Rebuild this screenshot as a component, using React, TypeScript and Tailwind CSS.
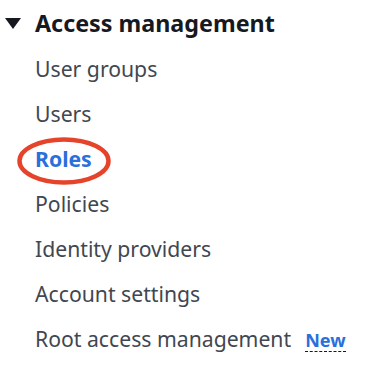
import React from 'react'

const items = [
  'User groups',
  'Users',
  'Roles',
  'Policies',
  'Identity providers',
  'Account settings',
]

const App = () => {
  return (
    <div
      className="w-[388px] h-[370px] bg-white overflow-hidden"
      style={{ fontFamily: '"Noto Sans", "Open Sans", sans-serif' }}
    >
      <div className="flex items-center h-[46px]">
        <svg width="16" height="11" viewBox="0 0 16 11" className="ml-[5px] mr-[14px]">
          <polygon points="0,0 16,0 8,11" fill="#16191f" />
        </svg>
        <span className="text-[23.3px] font-bold text-[#16191f] leading-[46px]">
          Access management
        </span>
      </div>
      <ul className="flex flex-col pl-[35px]">
        {items.map((item) => (
          <li
            key={item}
            className="relative h-[45px] leading-[45px] text-[21.2px]"
          >
            {item === 'Roles' ? (
              <>
                <span className="font-bold text-[#2a6fdb]">Roles</span>
                {/* hand-drawn highlight around the active link */}
                <svg
                  width="96"
                  height="52"
                  viewBox="0 0 96 52"
                  className="absolute left-[-19px] top-[-1.5px]"
                >
                  <ellipse
                    cx="48"
                    cy="26"
                    rx="44.5"
                    ry="21.5"
                    fill="none"
                    stroke="#e6432b"
                    strokeWidth="4.5"
                  />
                </svg>
              </>
            ) : (
              <span className="text-[#414750]">{item}</span>
            )}
          </li>
        ))}
        <li className="flex items-baseline h-[45px] leading-[45px] text-[21.2px]">
          <span className="text-[#414750]">Root access management</span>
          <span className="ml-[14px] text-[18px] font-bold text-[#2a6fdb] leading-[22px] border-b border-dashed border-[#16191f]">
            New
          </span>
        </li>
      </ul>
    </div>
  )
}

export default App
